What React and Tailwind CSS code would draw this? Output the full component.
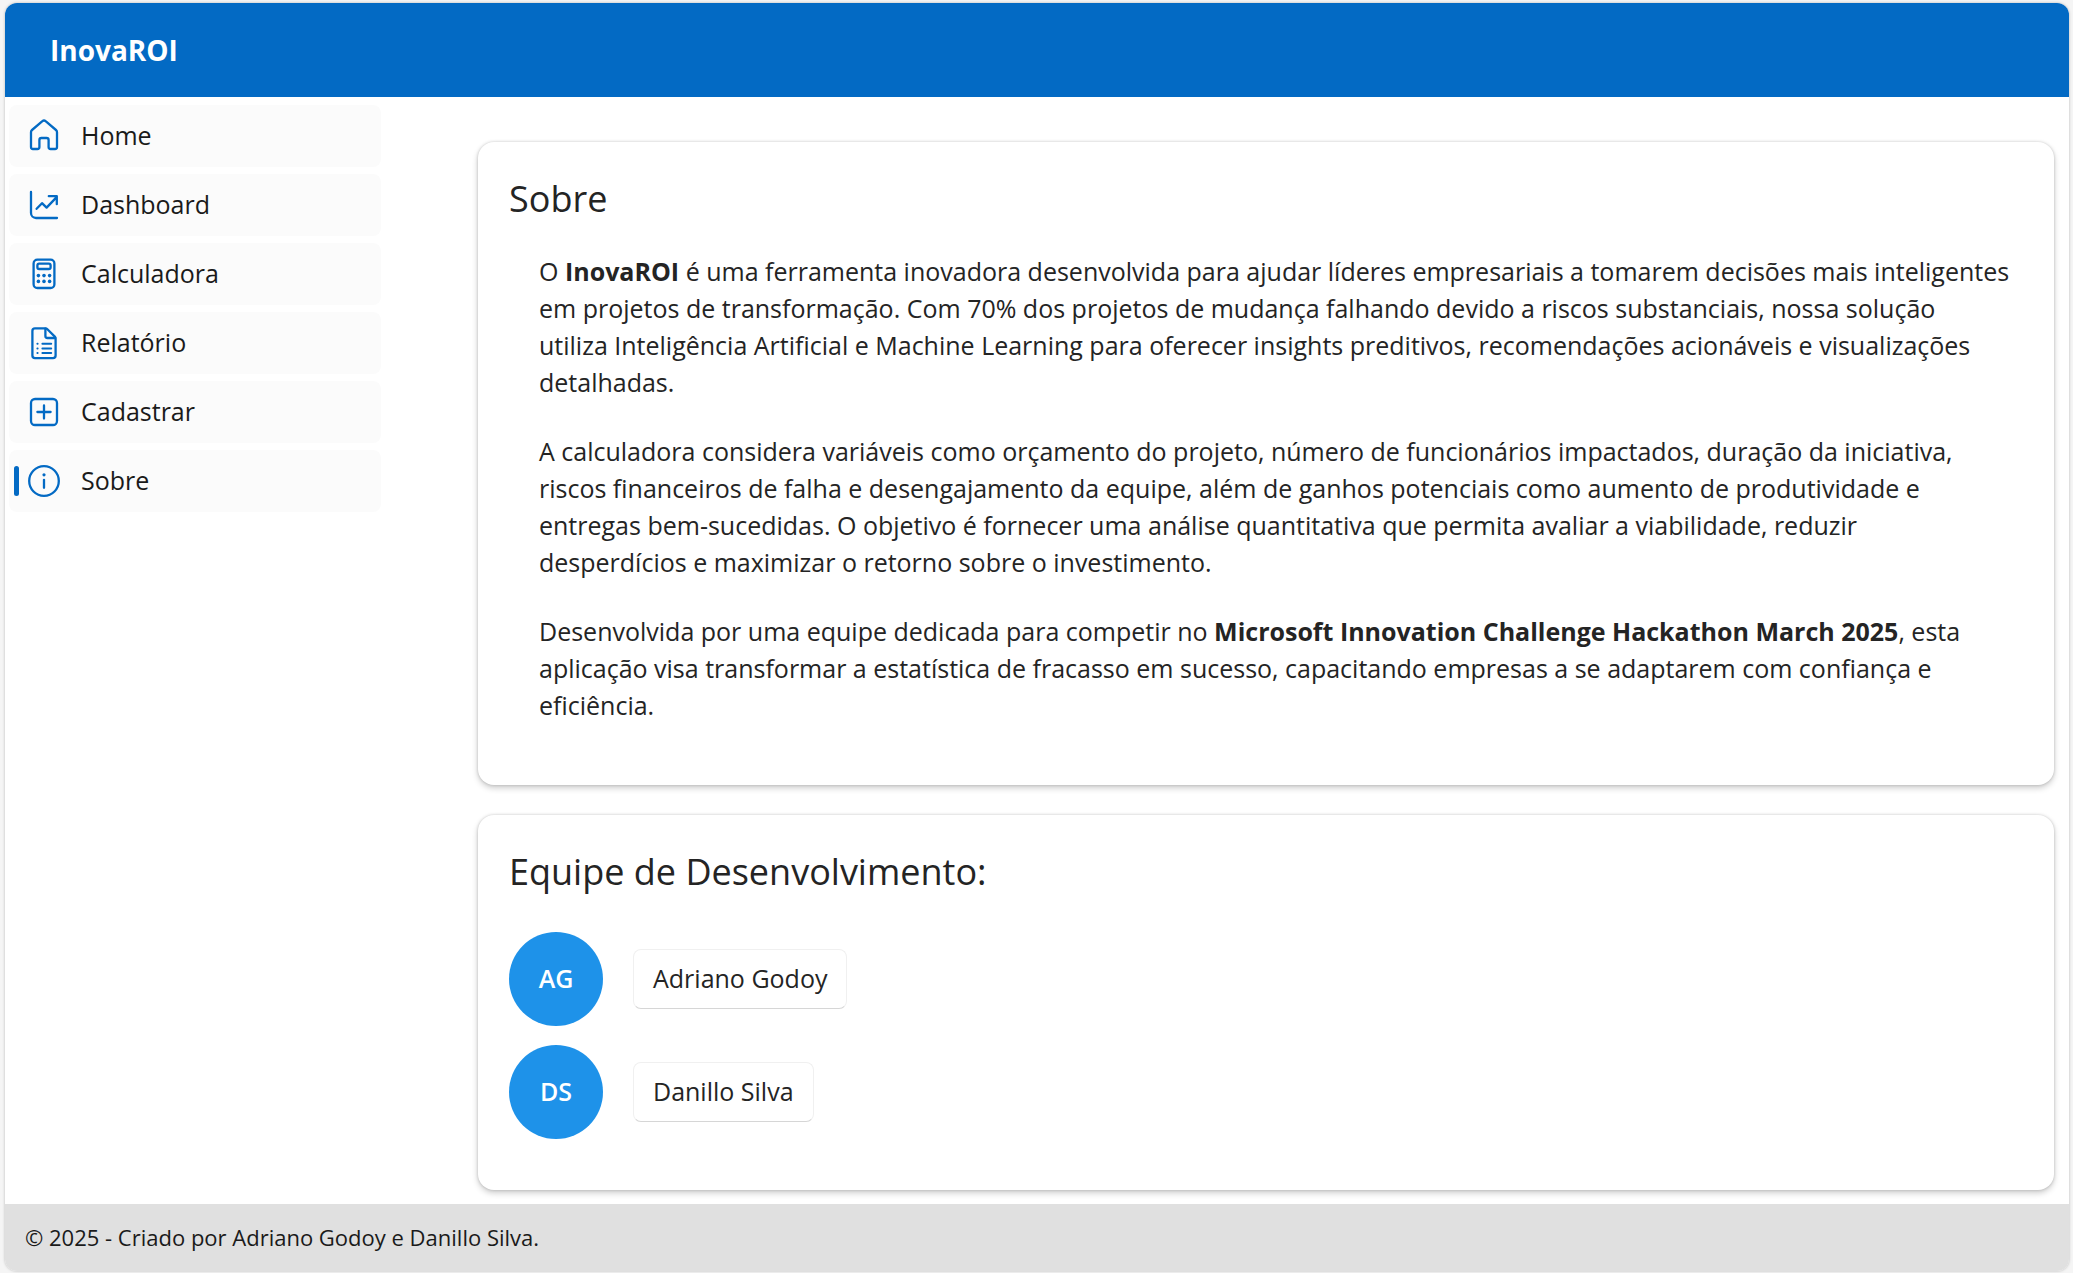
const icons = {
  home: (
    <path d="M3.5 8.1a1.4 1.4 0 0 1 .5-1.1l5.2-4.4a1.2 1.2 0 0 1 1.6 0L16 7a1.4 1.4 0 0 1 .5 1.1v7.4a1 1 0 0 1-1 1h-2.2a1 1 0 0 1-1-1V12a1 1 0 0 0-1-1H8.7a1 1 0 0 0-1 1v3.5a1 1 0 0 1-1 1H4.5a1 1 0 0 1-1-1z" />
  ),
  chart: (
    <>
      <path d="M3.5 3.5V14A2.5 2.5 0 0 0 6 16.5h10.5" />
      <path d="M6.3 11.9 9 9.1l2.3 2.2 4.9-5.1M12.4 5.6h4v4" />
    </>
  ),
  calculator: (
    <>
      <rect x="4.8" y="2.8" width="10.4" height="14.2" rx="1.9" />
      <rect x="6.7" y="4.8" width="6.6" height="2.7" rx="0.9" />
      <g fill="currentColor" stroke="none">
        <circle cx="7.2" cy="10.8" r="0.9" />
        <circle cx="10" cy="10.8" r="0.9" />
        <circle cx="12.8" cy="10.8" r="0.9" />
        <circle cx="7.2" cy="13.7" r="0.9" />
        <circle cx="10" cy="13.7" r="0.9" />
        <circle cx="12.8" cy="13.7" r="0.9" />
      </g>
    </>
  ),
  report: (
    <>
      <path d="M5.5 2.7h5.2a1.4 1.4 0 0 1 1 .4l3.7 3.7a1.4 1.4 0 0 1 .4 1v8.5a1.3 1.3 0 0 1-1.3 1.3h-9a1.3 1.3 0 0 1-1.3-1.3V4a1.3 1.3 0 0 1 1.3-1.3z" />
      <path d="M10.7 2.8v3.7a1 1 0 0 0 1 1h3.9" />
      <path d="M9.2 10.4h4.4M9.2 12.7h4.4M9.2 15h4.4M6.7 10.4h.1M6.7 12.7h.1M6.7 15h.1" strokeWidth="1" />
    </>
  ),
  add: (
    <>
      <rect x="3.5" y="3.5" width="13" height="13" rx="2" />
      <path d="M10 6.7v6.6M6.7 10h6.6" />
    </>
  ),
  info: (
    <>
      <circle cx="10" cy="10" r="7.4" />
      <path d="M10 9.4v4" />
      <circle cx="10" cy="6.9" r="0.8" fill="currentColor" stroke="none" />
    </>
  ),
};

const links = [
  { label: "Home", icon: "home" },
  { label: "Dashboard", icon: "chart" },
  { label: "Calculadora", icon: "calculator" },
  { label: "Relatório", icon: "report" },
  { label: "Cadastrar", icon: "add" },
  { label: "Sobre", icon: "info", active: true },
];

const team = [
  { name: "Adriano Godoy", initials: "AG" },
  { name: "Danillo Silva", initials: "DS" },
];

function NavLink({ label, icon, active }) {
  return (
    <a
      href="#"
      aria-current={active ? "page" : undefined}
      className="relative flex h-[62px] items-center gap-[17px] rounded-lg bg-[#fbfbfb] pl-[15px] text-[#1a1a1a]"
    >
      {active && <span className="absolute left-[5px] h-[30px] w-[5px] rounded-sm bg-[#036ac4]" />}
      <svg
        viewBox="0 0 20 20"
        className="size-10 text-[#036ac4]"
        fill="none"
        stroke="currentColor"
        strokeWidth="1.15"
        strokeLinecap="round"
        strokeLinejoin="round"
        aria-hidden="true"
      >
        {icons[icon]}
      </svg>
      {label}
    </a>
  );
}

function Card({ title, children }) {
  return (
    <section className="rounded-2xl bg-white px-[31px] shadow-[0_0_3px_rgba(0,0,0,0.18),0_3px_6px_rgba(0,0,0,0.2)]">
      <h2 className="pt-[33px] text-4xl leading-12">{title}</h2>
      {children}
    </section>
  );
}

export default function App() {
  return (
    <div className="flex min-h-screen flex-col bg-[#f5f5f5] pt-[3px] pr-1 pb-0.5 pl-[5px] font-['Open_Sans',sans-serif] text-[25px] text-[#242424]">
      <div className="flex flex-1 flex-col overflow-hidden rounded-xl bg-white shadow-[0_0_3px_rgba(0,0,0,0.25)]">
        <header className="flex h-[94px] items-center bg-[#036ac4] px-[45px]">
          <h1 className="text-[28px] font-bold text-white">InovaROI</h1>
        </header>
        <div className="flex flex-1">
          <nav className="flex w-[376px] shrink-0 flex-col gap-[7px] pt-2 pl-1">
            {links.map((link) => (
              <NavLink key={link.label} {...link} />
            ))}
          </nav>
          <main className="ml-[97px] flex flex-1 flex-col gap-[30px] pt-[45px] pr-[15px] pb-[13px]">
            <Card title="Sobre">
              <div className="flex flex-col gap-8 pt-[30px] pr-[7px] pb-[61px] pl-[30px] leading-[37px]">
                <p>
                  O <strong>InovaROI</strong> é uma ferramenta inovadora desenvolvida para ajudar
                  líderes empresariais a tomarem decisões mais inteligentes em projetos de
                  transformação. Com 70% dos projetos de mudança falhando devido a riscos
                  substanciais, nossa solução
                  <br />
                  utiliza Inteligência Artificial e Machine Learning para oferecer insights
                  preditivos, recomendações acionáveis e visualizações detalhadas.
                </p>
                <p>
                  A calculadora considera variáveis como orçamento do projeto, número de
                  funcionários impactados, duração da iniciativa, riscos financeiros de falha e
                  desengajamento da equipe, além de ganhos potenciais como aumento de produtividade
                  e entregas bem-sucedidas. O objetivo é fornecer uma análise quantitativa que
                  permita avaliar a viabilidade, reduzir
                  <br />
                  desperdícios e maximizar o retorno sobre o investimento.
                </p>
                <p>
                  Desenvolvida por uma equipe dedicada para competir no{" "}
                  <strong>Microsoft Innovation Challenge Hackathon March 2025</strong>, esta
                  aplicação visa transformar a estatística de fracasso em sucesso, capacitando
                  empresas a se adaptarem com confiança e eficiência.
                </p>
              </div>
            </Card>
            <Card title="Equipe de Desenvolvimento:">
              <ul className="flex flex-col gap-[19px] pt-9 pb-[51px]">
                {team.map(({ name, initials }) => (
                  <li key={name} className="flex items-center gap-[30px]">
                    <span className="flex size-[94px] items-center justify-center rounded-full bg-[#1e92e9] font-semibold text-white">
                      {initials}
                    </span>
                    <span className="flex h-[60px] items-center rounded-lg border border-[#f0f0f0] border-b-[#d6d6d6] px-[19px]">
                      {name}
                    </span>
                  </li>
                ))}
              </ul>
            </Card>
          </main>
        </div>
        <footer className="flex h-[67px] items-center bg-[#e0e0e0] px-5 text-[22px] text-[#1a1a1a]">
          © 2025 - Criado por Adriano Godoy e Danillo Silva.
        </footer>
      </div>
    </div>
  );
}
